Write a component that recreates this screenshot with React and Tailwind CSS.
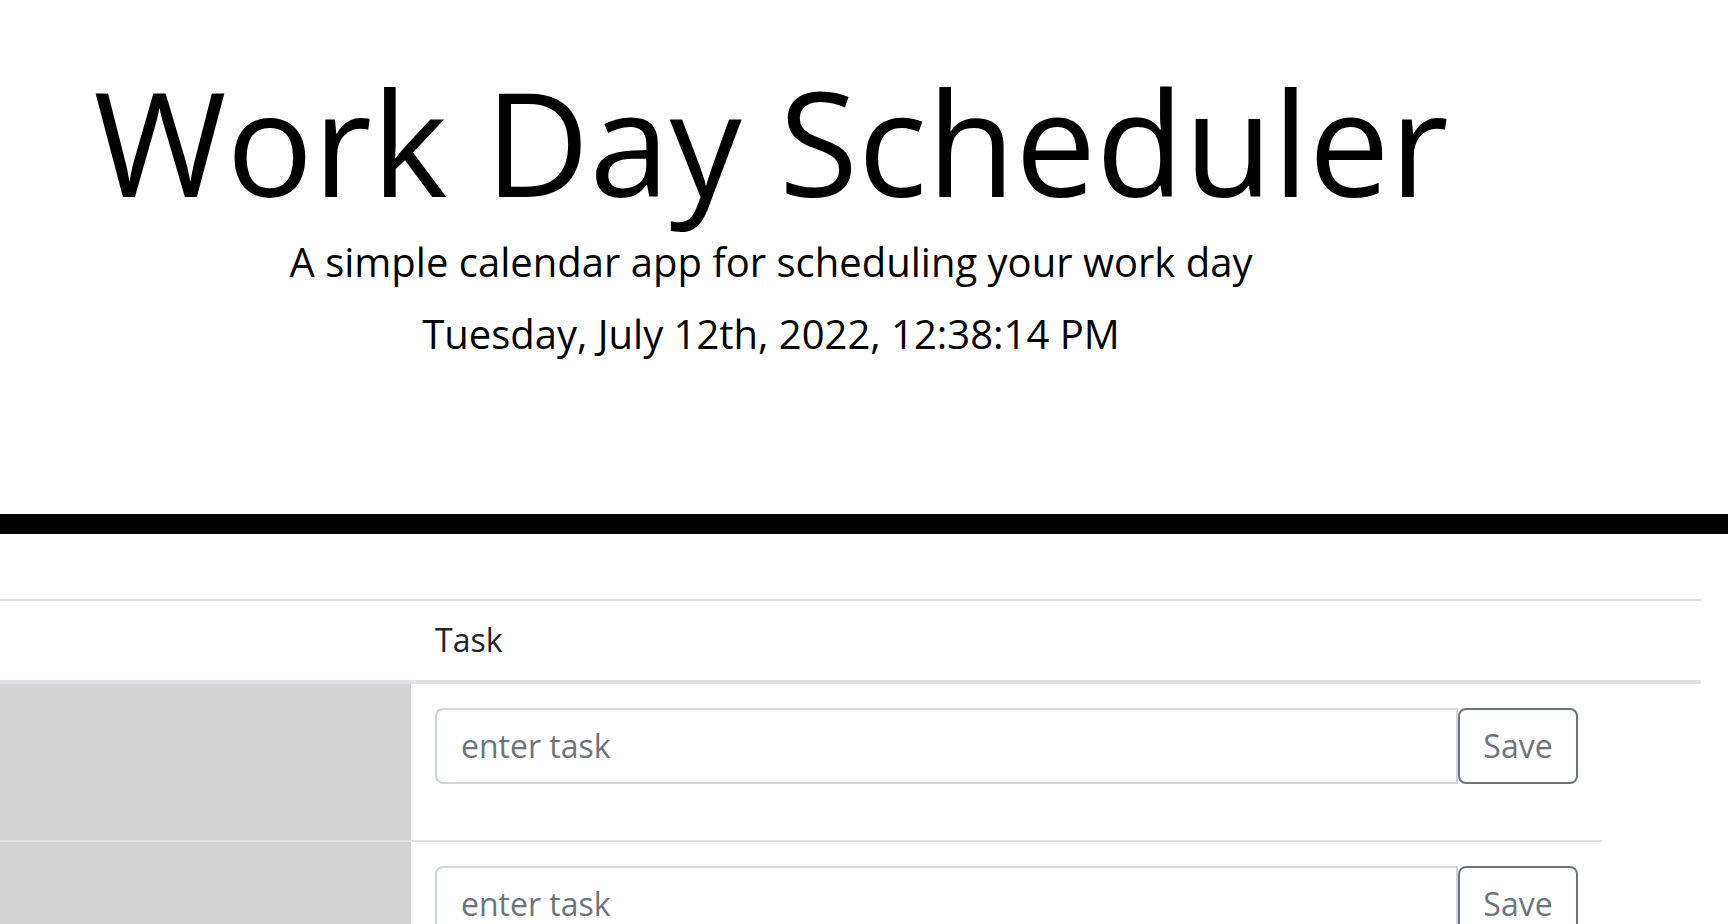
export default function App() {
  const rows = [0, 1]

  return (
    <div className="min-h-screen bg-white font-['Open_Sans',sans-serif] text-black">
      <header className="w-[1542px] text-center">
        <h1 className="pt-[55px] text-[144px] font-normal leading-[1.2]">
          Work Day Scheduler
        </h1>
        <p className="mt-[4px] text-[40px] leading-[60px]">
          A simple calendar app for scheduling your work day
        </p>
        <p className="mt-[12px] text-[40px] leading-[60px]">
          Tuesday, July 12th, 2022, 12:38:14 PM
        </p>
      </header>

      <div className="mt-[150px] h-[20px] w-full bg-black" />

      <div className="mt-[65px] text-[32px] leading-[48px] text-[#212529]">
        <div className="flex w-[1701px] border-t-2 border-b-4 border-[#dee2e6]">
          <div className="w-[411px]" />
          <div className="w-[1191px] pl-[24px] pt-[15px] pb-[16px]">Task</div>
          <div className="flex-1" />
        </div>

        {rows.map((row) => (
          <div
            key={row}
            className="flex w-[1602px] border-b-2 border-[#dee2e6]"
          >
            <div className="w-[411px] bg-[#d3d3d3]" />
            <div className="flex-1 p-[24px]">
              <div className="mb-[32px] flex">
                <input
                  type="text"
                  placeholder="enter task"
                  className="min-w-0 flex-1 rounded-l-[8px] border-2 border-[#ced4da] px-[24px] py-[12px] text-[32px] leading-[48px] text-[#495057] placeholder:text-[#6c757d]"
                />
                <button className="w-[120px] rounded-[8px] border-2 border-[#6c757d] text-[32px] leading-[48px] text-[#6c757d]">
                  Save
                </button>
              </div>
            </div>
          </div>
        ))}
      </div>
    </div>
  )
}
